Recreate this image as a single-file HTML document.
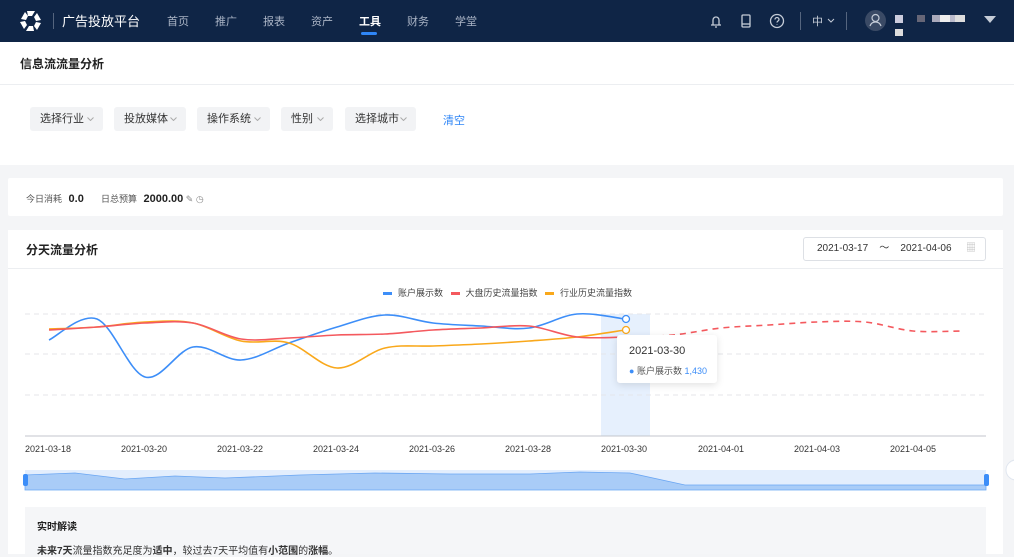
<!DOCTYPE html>
<html><head><meta charset="utf-8"><style>
*{box-sizing:border-box;margin:0;padding:0}
body{width:1014px;height:554px;overflow:hidden;background:#f4f5f7;font-family:"Liberation Sans","Noto Sans CJK SC",sans-serif;position:relative;color:#333}
.a{position:absolute}
.nav{left:0;top:0;width:1014px;height:42px;background:#0f2546}
.nv{color:#aab4c5;font-size:11px;top:13px}
.btn{top:107px;height:24px;line-height:24px;background:#f2f3f5;border-radius:3px;font-size:11px;color:#333;padding-left:10px}
.btn svg{position:absolute;right:9px;top:10px}
.lbl{font-size:9px;color:#333;top:444px}
</style></head><body>
<div class="a nav"></div>
<svg class="a" style="left:19px;top:10px" width="24" height="22" viewBox="0 0 24 22"><g fill="#fff"><path d="M8 1h8l-3 5H9z"/><path d="M18 3l4 7-5 1-2-4z"/><path d="M22 13l-4 7-3-4 2-4z"/><path d="M15 21H7l3-5h4z"/><path d="M5 19L1 12l5-1 2 4z"/><path d="M2 9l4-7 3 4-2 4z"/></g></svg>
<div class="a" style="left:53px;top:13px;width:1px;height:16px;background:#55657e"></div>
<div class="a" style="left:62px;top:11px;color:#fff;font-size:13px">广告投放平台</div>
<div class="a nv" style="left:167px">首页</div><div class="a nv" style="left:215px">推广</div><div class="a nv" style="left:263px">报表</div><div class="a nv" style="left:311px">资产</div>
<div class="a nv" style="left:359px;color:#fff;font-weight:bold">工具</div>
<div class="a" style="left:361px;top:32px;width:16px;height:3px;background:#2f86f6;border-radius:2px"></div>
<div class="a nv" style="left:407px">财务</div><div class="a nv" style="left:455px">学堂</div>
<svg class="a" style="left:708px;top:13px" width="90" height="16" fill="none" stroke="#c5ccd7" stroke-width="1.3"><path d="M3 12h10M5 12V7a3 3 0 016 0v5M7 14h2"/><rect x="34" y="2" width="8" height="12" rx="1"/><path d="M34 11h8"/><circle cx="69" cy="8" r="6.5"/><path d="M67 6.5a2 2 0 114 0c0 1.5-2 1.5-2 3M69 11.5v.5"/></svg>
<div class="a" style="left:800px;top:12px;width:1px;height:18px;background:#55657e"></div>
<div class="a" style="left:812px;top:13px;color:#c5ccd7;font-size:11px">中</div>
<svg class="a" style="left:827px;top:18px" width="8" height="5" fill="none" stroke="#c5ccd7"><path d="M1 1l3 3 3-3"/></svg>
<div class="a" style="left:846px;top:12px;width:1px;height:18px;background:#55657e"></div>
<div class="a" style="left:865px;top:10px;width:21px;height:21px;border-radius:50%;background:#3a4a65"></div>
<svg class="a" style="left:869px;top:13px" width="13" height="14" fill="none" stroke="#c5ccd7" stroke-width="1.2"><circle cx="6.5" cy="5" r="3.5"/><path d="M1 13c1-3 3-4 5.5-4s4.5 1 5.5 4"/></svg>
<div class="a" style="left:895px;top:15px;width:8px;height:8px;background:#ccd"></div><div class="a" style="left:895px;top:29px;width:8px;height:7px;background:#ddd"></div>
<div class="a" style="left:917px;top:15px;width:48px;height:7px;background:linear-gradient(90deg,#667 0 8px,transparent 8px 15px,#aab 15px 23px,#eee 23px 33px,#bbc 33px 38px,#ddd 38px)"></div>
<div class="a" style="left:984px;top:16px;border:6px solid transparent;border-top:7px solid #c5ccd7"></div>
<div class="a" style="left:0;top:42px;width:1014px;height:123px;background:#fff"></div>
<div class="a" style="left:0;top:84px;width:1014px;height:1px;background:#eceef1"></div>
<div class="a" style="left:20px;top:55px;font-size:12px;font-weight:bold;color:#222">信息流流量分析</div>
<div class="a btn" style="left:30px;width:73px">选择行业<svg width="7" height="4" fill="none" stroke="#aaa"><path d="M.5.5l3 3 3-3"/></svg></div>
<div class="a btn" style="left:114px;width:72px">投放媒体<svg width="7" height="4" fill="none" stroke="#aaa"><path d="M.5.5l3 3 3-3"/></svg></div>
<div class="a btn" style="left:197px;width:73px">操作系统<svg width="7" height="4" fill="none" stroke="#aaa"><path d="M.5.5l3 3 3-3"/></svg></div>
<div class="a btn" style="left:281px;width:52px">性别<svg width="7" height="4" fill="none" stroke="#aaa"><path d="M.5.5l3 3 3-3"/></svg></div>
<div class="a btn" style="left:345px;width:71px">选择城市<svg width="7" height="4" fill="none" stroke="#aaa"><path d="M.5.5l3 3 3-3"/></svg></div>
<div class="a" style="left:443px;top:112px;font-size:11px;color:#2f86f6">清空</div>
<div class="a" style="left:8px;top:178px;width:995px;height:38px;background:#fff;border-radius:2px"></div>
<div class="a" style="left:26px;top:192px;font-size:9px;color:#555">今日消耗 <b style="font-size:11px;color:#222;margin-left:4px">0.0</b></div>
<div class="a" style="left:101px;top:192px;font-size:9px;color:#555">日总预算 <b style="font-size:11px;color:#222;margin-left:4px">2000.00</b> <span style="color:#888">✎ ◷</span></div>
<div class="a" style="left:8px;top:230px;width:995px;height:324px;background:#fff"></div>
<div class="a" style="left:8px;top:268px;width:995px;height:1px;background:#eceef1"></div>
<div class="a" style="left:26px;top:241px;font-size:12px;font-weight:bold;color:#222">分天流量分析</div>
<div class="a" style="left:803px;top:237px;width:183px;height:24px;border:1px solid #dde0e5;border-radius:3px;font-size:10px;color:#333;padding:5px 0 0 13px;line-height:12px">2021-03-17 &nbsp;&nbsp;&nbsp;〜&nbsp;&nbsp;&nbsp; 2021-04-06<span style="position:absolute;right:9px;top:5px;color:#bbb">▦</span></div>
<div class="a" style="left:383px;top:286px;font-size:9px;color:#444;white-space:nowrap"><span style="display:inline-block;width:9px;height:3px;background:#3d8ef8;vertical-align:middle;margin-right:6px"></span>账户展示数 &nbsp;&nbsp;<span style="display:inline-block;width:9px;height:3px;background:#f4595e;vertical-align:middle;margin-right:6px"></span>大盘历史流量指数 &nbsp;&nbsp;<span style="display:inline-block;width:9px;height:3px;background:#f9a81b;vertical-align:middle;margin-right:6px"></span>行业历史流量指数</div>
<div class="a" style="left:601px;top:314px;width:49px;height:122px;background:#e6f0fd"></div>
<svg class="a" style="left:0;top:0" width="1014" height="554">
<g stroke="#e4e6ea" stroke-dasharray="5 4"><path d="M25 314H986M25 354H986M25 395H986"/></g>
<path d="M25 436H986" stroke="#c3c6cc"/>
<path id="b" fill="none" stroke="#3d8ef8" stroke-width="1.6"/>
<path id="o" fill="none" stroke="#f9a81b" stroke-width="1.6"/>
<path id="r" fill="none" stroke="#f4595e" stroke-width="1.6"/>
<path id="rd" fill="none" stroke="#f4595e" stroke-width="1.6" stroke-dasharray="6 5"/>
<circle cx="626" cy="319" r="3.5" fill="#fff" stroke="#3d8ef8" stroke-width="1.3"/>
<circle cx="626" cy="330" r="3.5" fill="#fff" stroke="#f9a81b" stroke-width="1.3"/>
<rect x="25" y="470" width="961" height="20" fill="#e3eefd"/>
<path id="z" fill="#a9ccf7" stroke="#6aa6f3" stroke-width="0.8"/>
<rect x="23" y="474" width="5" height="12" rx="2" fill="#3d8ef8"/><rect x="984" y="474" width="5" height="12" rx="2" fill="#3d8ef8"/>
<circle cx="1016" cy="470" r="10" fill="#fff" stroke="#e0e6ef"/>
</svg>
<div class="lbl a" style="left:25px">2021-03-18</div><div class="lbl a" style="left:121px">2021-03-20</div><div class="lbl a" style="left:217px">2021-03-22</div><div class="lbl a" style="left:313px">2021-03-24</div><div class="lbl a" style="left:409px">2021-03-26</div><div class="lbl a" style="left:505px">2021-03-28</div><div class="lbl a" style="left:601px">2021-03-30</div><div class="lbl a" style="left:698px">2021-04-01</div><div class="lbl a" style="left:794px">2021-04-03</div><div class="lbl a" style="left:890px">2021-04-05</div>
<div class="a" style="left:617px;top:335px;width:100px;height:48px;background:#fff;border-radius:3px;box-shadow:0 2px 8px rgba(0,0,0,.12)"></div>
<div class="a" style="left:629px;top:345px;font-size:11px;color:#333">2021-03-30</div>
<div class="a" style="left:629px;top:364px;font-size:9px;color:#555"><span style="color:#3d8ef8">●</span> 账户展示数 <span style="color:#3d8ef8">1,430</span></div>
<div class="a" style="left:25px;top:507px;width:961px;height:47px;background:#f5f6f8"></div>
<div class="a" style="left:37px;top:518px;font-size:10px;font-weight:bold;color:#222">实时解读</div>
<div class="a" style="left:37px;top:542px;font-size:10px;color:#333"><b>未来7天</b>流量指数充足度为<b>适中</b>，较过去7天平均值有<b>小范围</b>的<b>涨幅</b>。</div>
<script>
function sm(p){let d="M"+p[0][0]+" "+p[0][1];for(let i=0;i<p.length-1;i++){const a=p[i-1]||p[i],b=p[i],c=p[i+1],e=p[i+2]||c;d+=" C"+(b[0]+(c[0]-a[0])/6)+" "+(b[1]+(c[1]-a[1])/6)+" "+(c[0]-(e[0]-b[0])/6)+" "+(c[1]-(e[1]-b[1])/6)+" "+c[0]+" "+c[1];}return d}
const X=i=>49+48*i;
const B=[340,319,377,347,360,343,327,315,323,326,328,314,319].map((y,i)=>[X(i),y]);
const O=[329,327,322,323,341,343,368,348,346,344,341,337,330].map((y,i)=>[X(i),y]);
const R=[330,327,323,323,339,338,335,334,330,328,326,337,337].map((y,i)=>[X(i),y]);
const RD=[337,335,328,325,322,322,331,331].map((y,i)=>[X(i+12),y]);
document.getElementById('b').setAttribute('d',sm(B));
document.getElementById('o').setAttribute('d',sm(O));
document.getElementById('r').setAttribute('d',sm(R));
document.getElementById('rd').setAttribute('d',sm(RD));
const Z=[[25,475],[75,473],[125,479],[175,476],[225,478],[300,475],[375,473],[450,474],[530,474],[580,472],[630,473],[685,485],[986,485]];
document.getElementById('z').setAttribute('d',"M"+Z.map(p=>p.join(" ")).join(" L")+" L986 490 L25 490Z");
</script>
</body></html>
